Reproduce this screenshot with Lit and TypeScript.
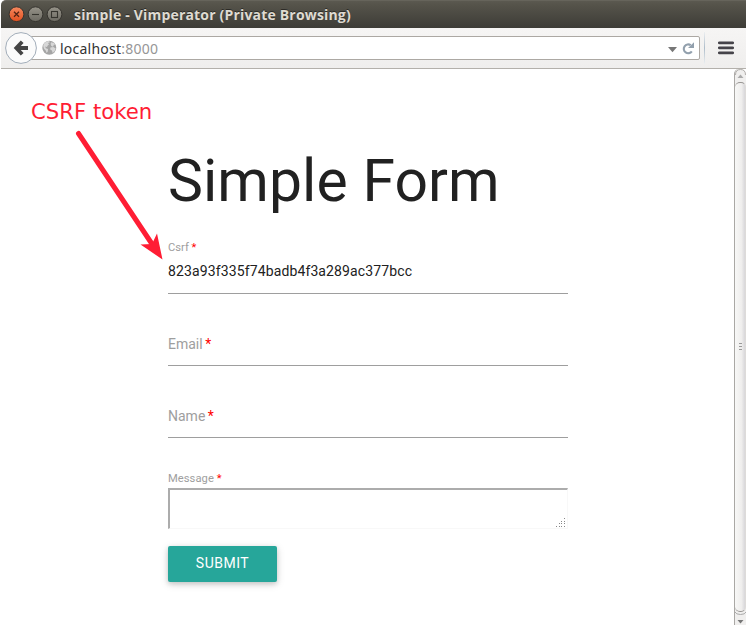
import { LitElement, html, css, svg } from "lit";
import { customElement, property } from "lit/decorators.js";

@customElement("window-title")
class WindowTitle extends LitElement {
  static styles = css`
    :host { display: flex; align-items: center; box-sizing: border-box; height: 28px; padding: 1px 0 0 7px;
      background: linear-gradient(#5b5950, #55534a 15%, #3d3c37); border-radius: 5px 0 0 0; border-top: 1px solid #66645b; }
    svg { width: 56px; height: 18px; flex: none; }
    .title { margin-left: 10px; font: 700 14px/18px "Open Sans", sans-serif; color: #dfdbd2; letter-spacing: 0.18px;
      white-space: nowrap; text-shadow: 0 -1px #2c2b27; }
  `;
  render() {
    return html`<svg viewBox="0 0 56 18">
        <defs><linearGradient id="o" x2="0" y2="1"><stop stop-color="#f5895f"/><stop offset="1" stop-color="#e2501f"/></linearGradient>
        <linearGradient id="g" x2="0" y2="1"><stop stop-color="#969389"/><stop offset="1" stop-color="#6c6a62"/></linearGradient></defs>
        <circle cx="8.5" cy="8.2" r="7.4" fill="url(#o)" stroke="#35332e"/>
        <circle cx="27.5" cy="8.2" r="7.4" fill="url(#g)" stroke="#35332e"/>
        <circle cx="46.5" cy="8.2" r="7.4" fill="url(#g)" stroke="#35332e"/>
        <path d="M6 5.7l5 5M11 5.7l-5 5" stroke="#542414" stroke-width="1.3"/>
        <path d="M24 8.5h7" stroke="#35342e" stroke-width="1.1"/>
        <rect x="43.5" y="5.5" width="6" height="6" fill="none" stroke="#35342e" stroke-width="1.1"/>
      </svg><div class="title">simple - Vimperator (Private Browsing)</div>`;
  }
}

@customElement("nav-bar")
class NavBar extends LitElement {
  static styles = css`
    :host { display: flex; align-items: center; box-sizing: border-box; height: 41px; padding: 0 0 1px 4px;
      background: linear-gradient(#f6f5f4, #efeeed); border-bottom: 1px solid #b3b0ab; }
    .back { width: 32px; height: 32px; flex: none; z-index: 1; }
    .field { display: flex; align-items: center; box-sizing: border-box; flex: none; width: 677px; height: 24px; margin-left: -14px;
      padding: 0 3px 0 18px; background: #fff; border: 1px solid #aca8a3; border-radius: 2px; }
    .globe { width: 15px; height: 15px; flex: none; }
    .url { flex: 1; margin: 2px 0 0 3px; font: 14px/20px "Noto Sans", sans-serif; color: #333; letter-spacing: 0.24px; }
    .port { color: #969696; }
    .tools { width: 30px; height: 16px; }
    .rule { width: 1px; height: 32px; margin-left: 4px; background: linear-gradient(#eceff1, #aebdca, #eceff1); }
    .menu { width: 16px; height: 14px; margin-left: 13px; }
  `;
  render() {
    return html`<svg class="back" viewBox="0 0 32 32">
        <circle cx="16" cy="16" r="15.4" fill="#fbfbfb" stroke="#a2adb9"/>
        <path d="M17.2 9.7L11.3 16L17.2 22.3M12 16H23" fill="none" stroke="#454545" stroke-width="3.8"/>
      </svg>
      <div class="field">
        <svg class="globe" viewBox="0 0 15 15">
          <circle cx="7.3" cy="7.8" r="7" fill="#a5a5a5"/>
          <path d="M2 3.4Q4.2 1 7 1l1 1.3-2 .8 1 1.3-1.3 1L5 7 3.1 6.4 3.9 8.2 6 9l-.2 2.6L4.7 13 3.7 10.6 2 8.8 1.2 6zM9 2.2l3 .8 1.5 2-1.5-.5L11 6.8 9.3 6 8.6 4zM8.4 7.5l3-.5 2.3 1.6-1 2.5-2 2-.8-2.6-1.7-1.1z" fill="#d8d8d8"/>
        </svg>
        <div class="url">localhost<span class="port">:8000</span></div>
        <svg class="tools" viewBox="0 0 30 16">
          <path d="M2 7h9L6.5 12.3z" fill="#777"/>
          <path d="M24.7 5.2A4.4 4.4 0 1 0 25.8 11.3" fill="none" stroke="#92a0ad" stroke-width="2.1"/>
          <path d="M28 2.2V8.1H22z" fill="#92a0ad"/>
        </svg>
      </div>
      <div class="rule"></div>
      <svg class="menu" viewBox="0 0 16 14"><path d="M1.3 1.8h13.4M1.3 6.8h13.4M1.3 11.8h13.4" stroke="#454349" stroke-width="2.7" stroke-linecap="round"/></svg>`;
  }
}

@customElement("text-field")
class TextField extends LitElement {
  @property() label = "";
  @property() value = "";
  static styles = css`
    :host { display: block; box-sizing: border-box; height: 72px; border-bottom: 1px solid #9e9e9e; font-family: Roboto, sans-serif; color: #9e9e9e; }
    .small { padding-top: 18px; font-size: 11.2px; line-height: 16px; }
    .large { padding-top: 40px; font-size: 14px; line-height: 20px; }
    .value { margin-top: 5px; font-size: 14px; line-height: 20px; color: #212121; letter-spacing: 0.125px; }
    .star { color: #f00; }
    .large .star { margin-left: -1px; }
  `;
  render() {
    return html`<div class=${this.value ? "small" : "large"}>${this.label} <span class="star">*</span></div>
      ${this.value ? html`<div class="value">${this.value}</div>` : ""}`;
  }
}

@customElement("scroll-track")
class ScrollTrack extends LitElement {
  static styles = css`
    :host { display: flex; flex-direction: column; box-sizing: border-box; width: 12px; height: 556px; border-left: 1px solid #aaa8a5; background: #f0efee; border-radius: 5px 5px 0 0; }
    .end { height: 13px; width: 11px; flex: none; }
    .thumb { display: flex; align-items: center; justify-content: center; flex: 1; box-sizing: border-box; border: 1px solid #989693; border-right-color: #dddbd9; border-left: 0; border-radius: 5px;
      background: linear-gradient(90deg, #f8f8f7, #efeeed 65%, #d8d7da); }
    .grip { width: 5px; height: 9px; margin-bottom: 2px; }
  `;
  render() {
    return html`<svg class="end" viewBox="0 0 11 13"><path d="M.5 6Q.5 .5 5.5 .5T10.5 6" fill="none" stroke="#b1aeab"/><path d="M2.5 9h6L5.5 5.5z" fill="#aaa"/></svg>
      <div class="thumb"><svg class="grip" viewBox="0 0 5 9"><path d="M1 1.5h3M1 4.5h3M1 7.5h3" stroke="#999"/></svg></div>
      <svg class="end" viewBox="0 0 11 13"><path d="M0 0Q1 2.5 5.5 2.5T11 0" fill="none" stroke="#aaa"/><path d="M2.5 8h6L5.5 11.5z" fill="#777"/></svg>`;
  }
}

@customElement("simple-form")
class SimpleForm extends LitElement {
  static styles = css`
    :host { display: block; width: 400px; font-family: Roboto, sans-serif; }
    h1 { margin: 0; padding-top: 77px; height: 76px; font-weight: 400; font-size: 58.8px; line-height: 70px; color: #212121; white-space: nowrap; letter-spacing: 0.08px; }
    .caption { padding-top: 33px; font-size: 11.2px; line-height: 16px; color: #9e9e9e; letter-spacing: 0.05px; }
    .star { color: #f00; }
    .area { display: flex; align-items: flex-end; justify-content: flex-end; box-sizing: border-box; height: 41px; margin-top: 1px; padding: 0 1px 0 0;
      border: 1px solid #f8f8f8; border-top: 2px solid #acacac; border-left: 2px solid #acacac; }
    .resize { width: 10px; height: 10px; }
    .submit { display: block; width: 109px; height: 36px; margin-top: 17px; padding: 0 0 2px; border: 0; border-radius: 2px;
      background: #26a69a; color: #fff; font: 14px/34px Roboto, sans-serif; letter-spacing: 0.5px;
      box-shadow: 0 2px 5px rgba(0,0,0,.16), 0 2px 10px rgba(0,0,0,.12); }
  `;
  render() {
    const dots = [[8, 0], [5, 3], [8, 3], [3, 5], [5, 5], [8, 5], [0, 8], [3, 8], [5, 8], [8, 8]];
    return html`<h1>Simple Form</h1>
      <text-field label="Csrf" value="823a93f335f74badb4f3a289ac377bcc"></text-field>
      <text-field label="Email"></text-field>
      <text-field label="Name"></text-field>
      <div class="caption">Message <span class="star">*</span></div>
      <div class="area"><svg class="resize" viewBox="0 0 10 10">${dots.map(([x, y]) => svg`<rect x=${x} y=${y} width="1" height="1" fill="#888"/>`)}</svg></div>
      <button class="submit">SUBMIT</button>`;
  }
}

@customElement("app-root")
class AppRoot extends LitElement {
  static styles = css`
    :host { display: block; width: 746px; height: 625px; overflow: hidden; background: #fff; position: relative; }
    .frame { margin-left: 1px; }
    .page { display: flex; justify-content: space-between; height: 556px; padding-left: 167px; }
    .note { position: absolute; left: 31px; top: 99px; font: 21.2px/26px "DejaVu Sans", sans-serif; color: #ff1d34; white-space: nowrap; }
    .arrow { position: absolute; left: 70px; top: 125px; width: 100px; height: 140px; }
  `;
  render() {
    return html`<div class="frame"><window-title></window-title><nav-bar></nav-bar>
      <div class="page"><simple-form></simple-form><scroll-track></scroll-track></div></div>
      <div class="note">CSRF token</div>
      <svg class="arrow" viewBox="0 0 100 140"><path d="M8.5 8.5L82 119" stroke="#ff1d34" stroke-width="5" stroke-linecap="round"/><path d="M92.5 134.5L70.5 119.5L82 119L87 108.5z" fill="#ff1d34"/></svg>`;
  }
}
